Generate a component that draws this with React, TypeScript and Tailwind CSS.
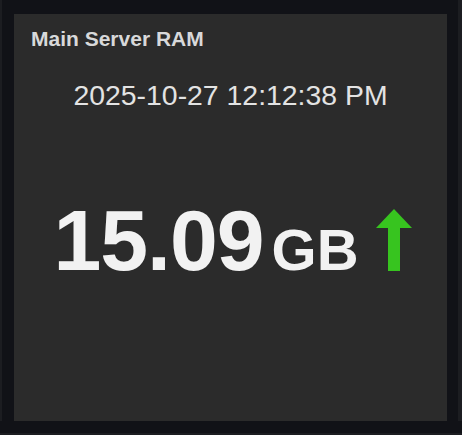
export default function App() {
  return (
    <div className="w-[462px] h-[435px] bg-[#111217] flex flex-col font-['Liberation_Sans',Arial,sans-serif] overflow-hidden">
      <div className="flex h-[433px]">
        {/* neighbour panel edge */}
        <div className="w-[2px] h-[421px] bg-[#1c1d21]" />
        <div className="w-[433px] h-[407px] mt-[14px] ml-[12px] bg-[#2b2b2b] flex flex-col">
          <div className="pl-[17px] pt-[13px] text-[21px] leading-[24px] font-bold text-[#d8d9da]">
            Main Server RAM
          </div>
          <div className="mt-[28px] text-center text-[28.4px] leading-[32px] text-[#e3e3e3]">
            2025-10-27 12:12:38 PM
          </div>
          <div className="mt-[86px] flex items-end justify-center pl-[4px]">
            <span className="text-[86px] leading-[86px] font-bold text-[#f2f2f2] tracking-[-1px]">15.09</span>
            <span className="ml-[8px] mb-[4px] text-[58px] leading-[58px] font-bold text-[#f2f2f2]">GB</span>
            <svg width="36" height="62" viewBox="0 0 36 62" className="ml-[17px] mb-[12px]">
              <polygon points="18,0 36,19 0,19" fill="#37c41f" />
              <rect x="12" y="18" width="12" height="44" fill="#37c41f" />
            </svg>
          </div>
        </div>
        <div className="w-[4px] h-[421px] ml-[11px] bg-[#1c1d21]" />
      </div>
      <div className="h-[2px] bg-[#1c1d21]" />
    </div>
  )
}
